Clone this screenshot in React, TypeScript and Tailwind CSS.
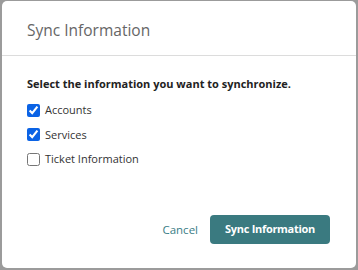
export default function App() {
  const items: [string, boolean][] = [
    ["Accounts", true],
    ["Services", true],
    ["Ticket Information", false],
  ];
  return (
    <div className="w-[358px] h-[270px] bg-[#9b9b9b] pl-[2px] pr-[2px] pt-[1px] pb-[2px] font-['Open_Sans',sans-serif]">
      <div className="flex h-full flex-col rounded-[5px] bg-white">
        <div className="flex h-[55px] items-center border-b border-[#dcdcdc] pl-[25px] pt-[6px]">
          <h2 className="text-[15.5px] text-[#666]">Sync Information</h2>
        </div>
        <div className="flex flex-1 flex-col pl-[25px] pt-[20px]">
          <p className="text-[11px] font-bold text-[#222]">Select the information you want to synchronize.</p>
          <div className="mt-[9px] flex flex-col gap-[7px]">
            {items.map(([label, checked]) => (
              <label key={label} className="flex h-[17.5px] items-center gap-[5px] text-[11px] text-[#333]">
                <input type="checkbox" defaultChecked={checked} className="m-0 h-[13px] w-[13px] accent-[#0b63e5]" />
                {label}
              </label>
            ))}
          </div>
        </div>
        <div className="flex items-center justify-end gap-[12px] pb-[24px] pr-[26px]">
          <button className="text-[11.5px] text-[#3a7d86]">Cancel</button>
          <button className="h-[29px] w-[120px] rounded-[4px] bg-[#3a7a80] text-[11px] font-bold tracking-[-0.3px] text-white">Sync Information</button>
        </div>
      </div>
    </div>
  );
}
